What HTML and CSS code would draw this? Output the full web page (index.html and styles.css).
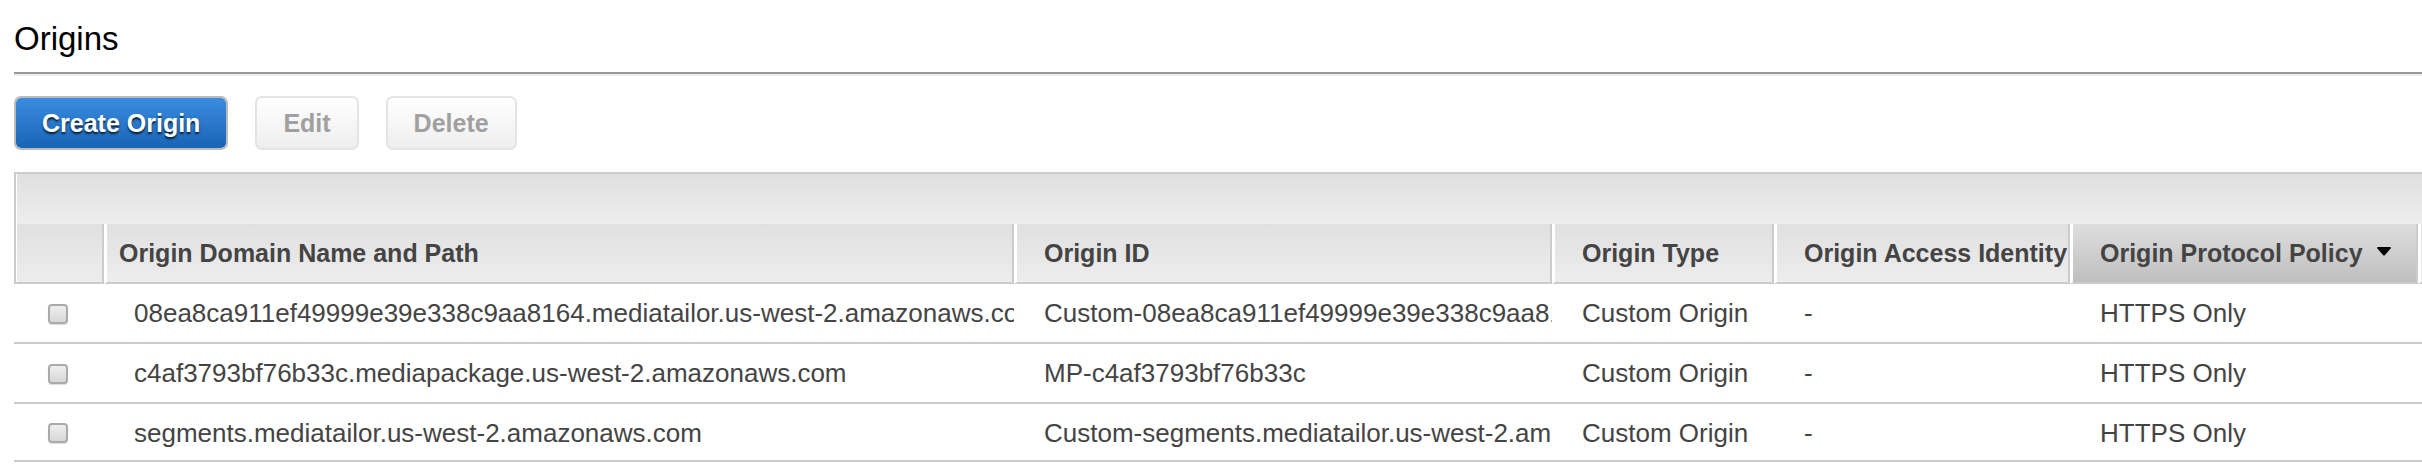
FILE: index.html
```html
<!DOCTYPE html>
<html lang="en">
<head>
<meta charset="utf-8">
<title>Origins</title>
<link rel="stylesheet" href="styles.css">
</head>
<body>
<main class="page">
  <h1 class="title">Origins</h1>
  <hr class="rule">
  <div class="toolbar">
    <button class="btn btn-primary" type="button">Create Origin</button>
    <button class="btn" type="button" disabled>Edit</button>
    <button class="btn" type="button" disabled>Delete</button>
  </div>
  <section class="grid">
    <div class="band"></div>
    <table class="origins">
      <colgroup>
        <col class="col-check"><col><col class="col-id"><col class="col-type"><col class="col-access"><col class="col-policy"><col class="col-end">
      </colgroup>
      <thead>
        <tr>
          <th class="check"></th>
          <th class="domain" scope="col">Origin Domain Name and Path</th>
          <th scope="col">Origin ID</th>
          <th scope="col">Origin Type</th>
          <th scope="col">Origin Access Identity</th>
          <th class="sorted" scope="col" aria-sort="descending"><button class="sort" type="button">Origin Protocol Policy<svg class="arrow" width="14" height="12" viewBox="0 0 14 12" aria-hidden="true"><path d="M1 0H13Q14 0 14 1L8 8Q7 9 6 8L0 1Q0 0 1 0Z"/></svg></button></th>
          <th class="end"></th>
        </tr>
      </thead>
      <tbody>
        <tr>
          <td class="check"><input class="box" type="checkbox" aria-labelledby="origin-1"></td>
          <td id="origin-1">08ea8ca911ef49999e39e338c9aa8164.mediatailor.us-west-2.amazonaws.com</td>
          <td>Custom-08ea8ca911ef49999e39e338c9aa8164</td>
          <td>Custom Origin</td>
          <td>-</td>
          <td>HTTPS Only</td>
          <td class="end"></td>
        </tr>
        <tr>
          <td class="check"><input class="box" type="checkbox" aria-labelledby="origin-2"></td>
          <td id="origin-2">c4af3793bf76b33c.mediapackage.us-west-2.amazonaws.com</td>
          <td>MP-c4af3793bf76b33c</td>
          <td>Custom Origin</td>
          <td>-</td>
          <td>HTTPS Only</td>
          <td class="end"></td>
        </tr>
        <tr>
          <td class="check"><input class="box" type="checkbox" aria-labelledby="origin-3"></td>
          <td id="origin-3">segments.mediatailor.us-west-2.amazonaws.com</td>
          <td>Custom-segments.mediatailor.us-west-2.amazonaws.com</td>
          <td>Custom Origin</td>
          <td>-</td>
          <td>HTTPS Only</td>
          <td class="end"></td>
        </tr>
      </tbody>
    </table>
  </section>
</main>
</body>
</html>
```
FILE: styles.css
```css
* { box-sizing: border-box; }

body {
  margin: 0;
  background: #fff;
  color: #444;
  font-family: "Liberation Sans", Arial, sans-serif;
  font-size: 26px;
  line-height: 30px;
}

.page { padding: 19px 0 14px 14px; }

.title {
  margin: 0;
  color: #000;
  font-size: 33px;
  font-weight: 400;
  line-height: 40px;
}

.rule {
  height: 4px;
  margin: 13px 0 20px;
  border: 0;
  border-top: 2px solid #999;
  border-bottom: 2px solid #eee;
}

.toolbar {
  display: flex;
  gap: 27px;
  margin-bottom: 22px;
}

.btn {
  height: 54px;
  padding: 0 26px;
  border: 2px solid #e4e4e4;
  border-radius: 7px;
  background: linear-gradient(#fff, #eee);
  color: #a0a0a0;
  font: bold 25px/30px "Liberation Sans", Arial, sans-serif;
}

.btn-primary {
  border-color: #bbb;
  background: linear-gradient(#3b8ce0, #1864b5) padding-box;
  color: #fff;
  text-shadow: 0 2px 2px rgba(0, 0, 0, 0.75);
}

.band {
  height: 52px;
  border-top: 2px solid #ccc;
  border-left: 2px solid #ccc;
  background: linear-gradient(#e0e0e0, #ededed);
  box-shadow: inset 1px 0 #fff;
}

.origins {
  width: 100%;
  table-layout: fixed;
  border-spacing: 0;
}

.col-check { width: 90px; }
.col-id { width: 538px; }
.col-type { width: 222px; }
.col-access { width: 296px; }
.col-policy { width: 348px; }
.col-end { width: 4px; }

th {
  height: 60px;
  padding: 0 0 0 27px;
  border-right: 2px solid #ccc;
  border-bottom: 2px solid #ccc;
  border-left: 3px solid #fff;
  background: linear-gradient(#e0e0e0, #ededed) padding-box;
  font-size: 25px;
  text-align: left;
  white-space: nowrap;
}

th.domain { padding-left: 12px; }

th.check {
  border-left: 2px solid #ccc;
  box-shadow: inset 1px 0 #fff;
}

th.sorted { background: linear-gradient(#dedede, #bfbfbf) padding-box; }

td {
  height: 60px;
  padding: 0 0 0 30px;
  border-bottom: 2px solid #ccc;
  overflow: hidden;
  white-space: nowrap;
}

tbody tr:last-child td {
  height: 58px;
  padding-top: 2px;
}

th.end,
td.end {
  padding: 0;
  border-right: 0;
}

td.check {
  padding-top: 2px;
  padding-left: 34px;
}

.sort {
  display: flex;
  align-items: center;
  gap: 14px;
  padding: 0;
  border: 0;
  background: none;
  color: inherit;
  font: inherit;
}

.arrow { fill: #000; }

.box {
  display: block;
  width: 20px;
  height: 20px;
  margin: 0;
  appearance: none;
  border: 2px solid #aaa;
  border-radius: 4px;
  background: linear-gradient(#eee, #d8d8d8);
  box-shadow: 0 1px 1px #ddd;
}
```
